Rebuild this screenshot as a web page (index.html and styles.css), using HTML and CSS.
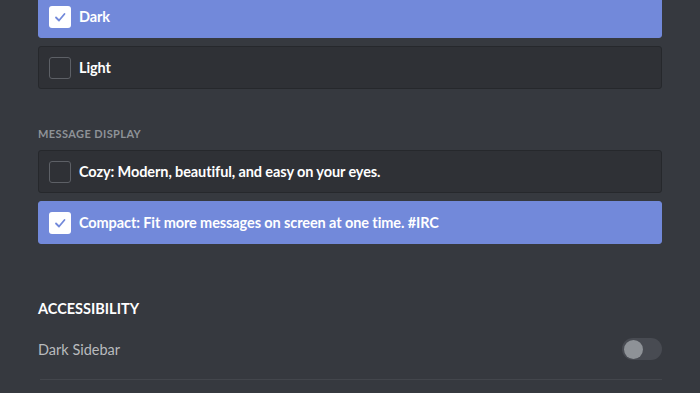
FILE: index.html
```html
<!DOCTYPE html>
<html lang="en">

<head>
    <meta charset="UTF-8" />
    <meta name="viewport" content="width=device-width, initial-scale=1" />
    <title>Appearance</title>
    <link rel="stylesheet" href="styles.css">
</head>

<body>

    <div class="settings">
        <div class="options">
            <div class="option selected">
                <span class="box">
                    <svg viewBox="0 0 22 22" width="22" height="22"><polyline points="7,11.5 10,14.5 15.5,8" /></svg>
                </span>
                <span class="option-text">Dark</span>
            </div>
            <div class="option">
                <span class="box"></span>
                <span class="option-text">Light</span>
            </div>
        </div>

        <div class="label">Message Display</div>
        <div class="options">
            <div class="option">
                <span class="box"></span>
                <span class="option-text">Cozy: Modern, beautiful, and easy on your eyes.</span>
            </div>
            <div class="option selected">
                <span class="box">
                    <svg viewBox="0 0 22 22" width="22" height="22"><polyline points="7,11.5 10,14.5 15.5,8" /></svg>
                </span>
                <span class="option-text">Compact: Fit more messages on screen at one time. #IRC</span>
            </div>
        </div>

        <h2 class="section-title">Accessibility</h2>
        <div class="switch-row">
            <span class="switch-label">Dark Sidebar</span>
            <span class="switch"><span class="knob"></span></span>
        </div>
        <div class="divider"></div>
    </div>

</body>

</html>
```

FILE: styles.css
```css
html,
body {
    margin: 0;
    padding: 0;
    height: 100%;
    background-color: #36393f;
    overflow: hidden;
    font-family: Lato, "Open Sans", sans-serif;
}

.settings {
    padding: 0 38px;
    margin-top: -5px;
}

.options {
    display: flex;
    flex-direction: column;
    gap: 8px;
}

.option {
    display: flex;
    align-items: center;
    gap: 8px;
    height: 43px;
    box-sizing: border-box;
    padding: 0 10px;
    border: 1px solid #26282c;
    border-radius: 3px;
    background: #2f3136;
}

.option.selected {
    background: #7289da;
    border-color: #7289da;
}

.box {
    width: 22px;
    height: 22px;
    box-sizing: border-box;
    border: 1.5px solid #5d6066;
    border-radius: 3px;
    display: flex;
}

.option.selected .box {
    background: #fff;
    border: none;
}

.box svg polyline {
    fill: none;
    stroke: #7289da;
    stroke-width: 1.8;
    stroke-linecap: round;
    stroke-linejoin: round;
}

.option-text {
    color: #fff;
    font-size: 14.5px;
    font-weight: 700;
    letter-spacing: -0.1px;
}

.label {
    margin: 38px 0 9px;
    font-size: 11px;
    line-height: 14px;
    font-weight: 700;
    text-transform: uppercase;
    color: #8e9297;
    letter-spacing: 0.4px;
}

.section-title {
    margin: 55px 0 19px;
    font-size: 14.5px;
    line-height: 20px;
    font-weight: 700;
    text-transform: uppercase;
    color: #fff;
}

.switch-row {
    display: flex;
    align-items: center;
    justify-content: space-between;
    height: 22px;
}

.switch-label {
    color: #b9bbbe;
    font-size: 14.5px;
}

.switch {
    width: 40px;
    height: 22px;
    border-radius: 11px;
    background: #484b52;
    display: flex;
    align-items: center;
    padding: 0 2px;
    box-sizing: border-box;
}

.knob {
    width: 19px;
    height: 19px;
    border-radius: 50%;
    background: #8e9297;
}

.divider {
    margin: 19px 0 0 2px;
    height: 1px;
    background: #43464c;
}
```
